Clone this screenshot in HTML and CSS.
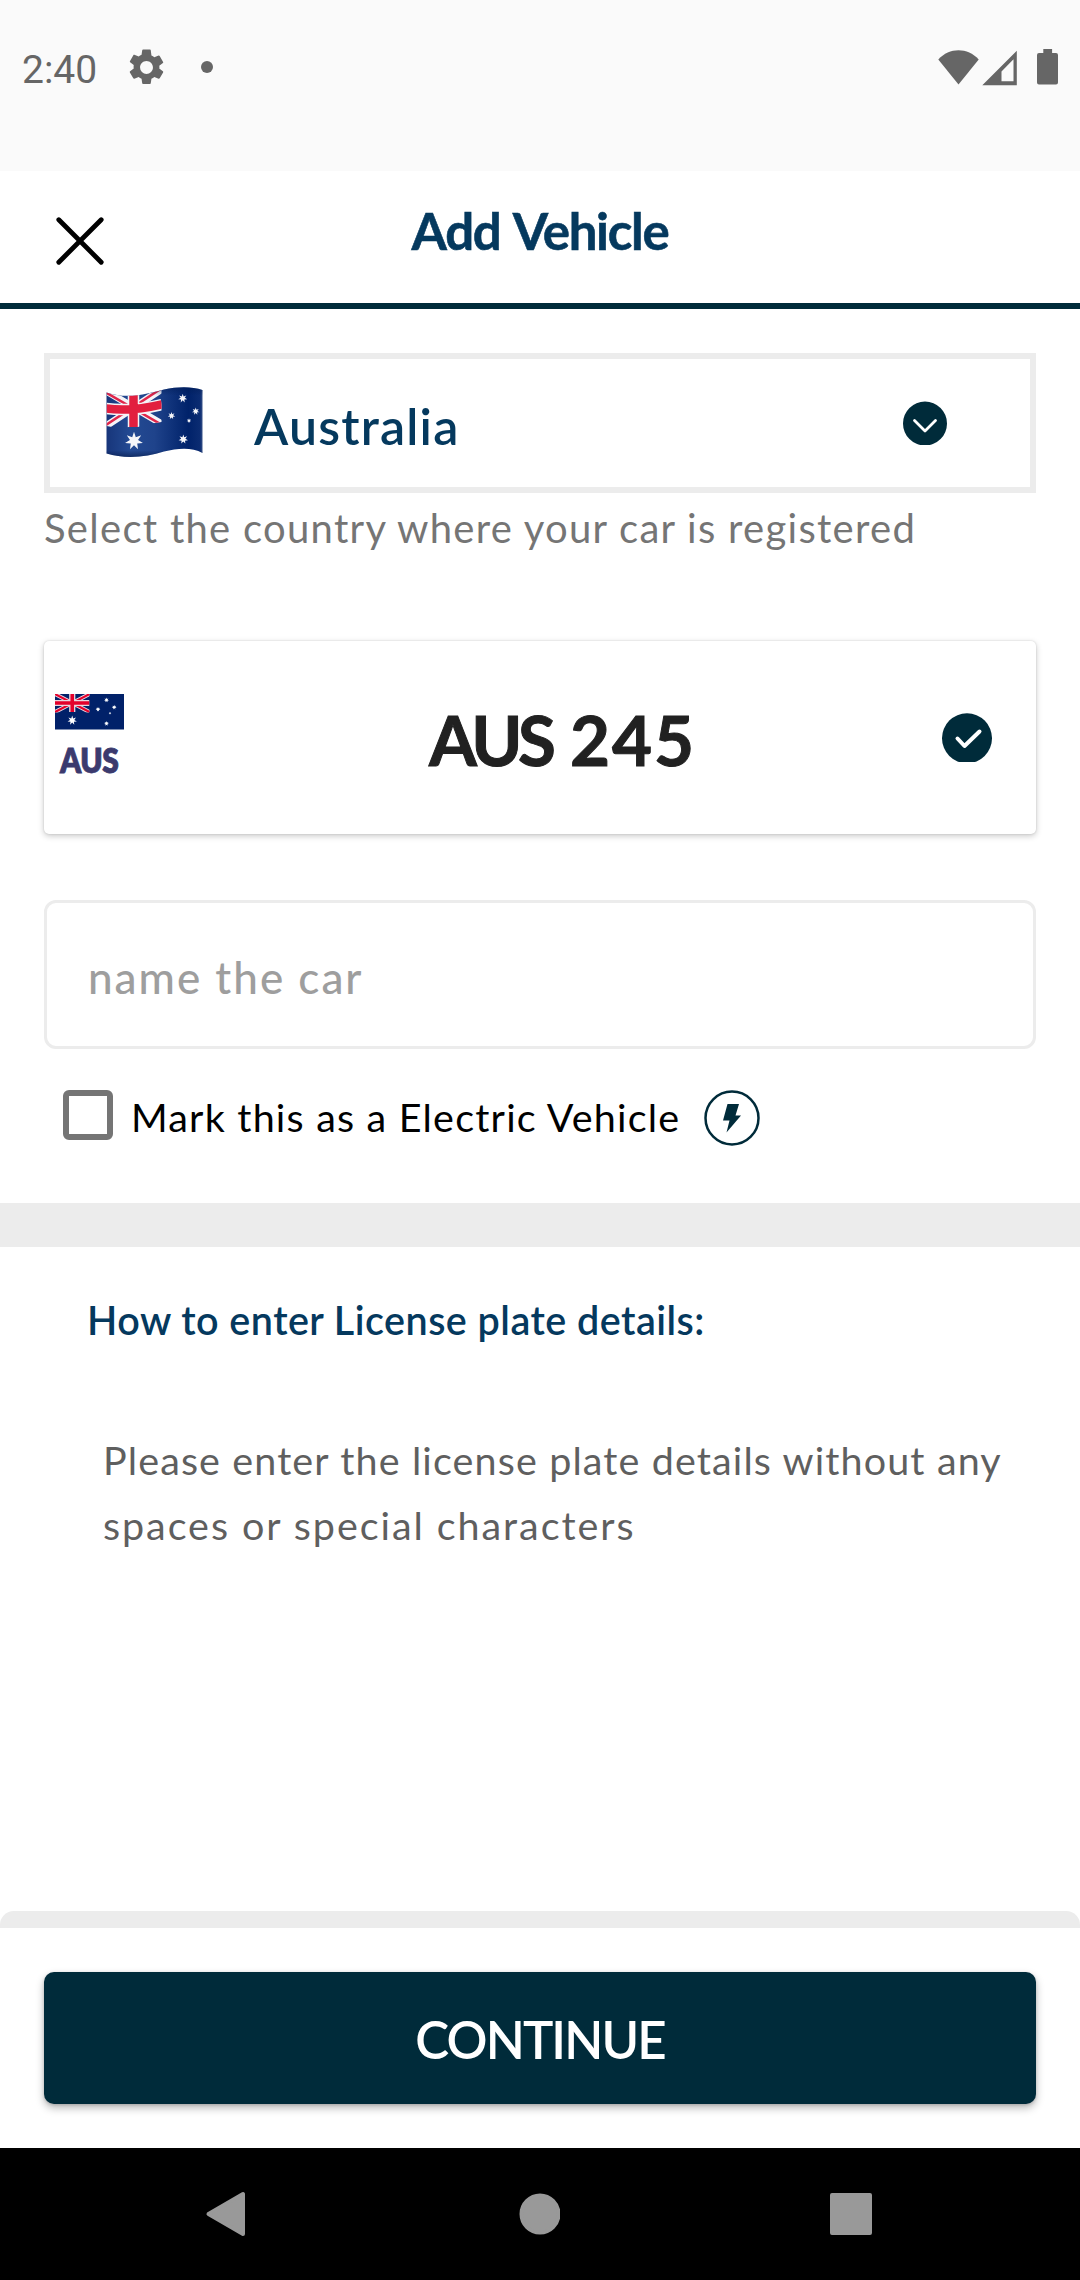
FILE: index.html
```
<!DOCTYPE html>
<html lang="en">
<head>
<meta charset="utf-8">
<title>Add Vehicle</title>
<link rel="stylesheet" href="styles.css">
</head>
<body>
<svg class="defs" width="0" height="0" aria-hidden="true">
  <defs>
    <path id="star" d="M0-10 1.95-4.05 7.82-6.23 4.39-1 9.75 2.23 3.52 2.81 4.34 9.01 0 4.5-4.34 9.01-3.52 2.81-9.75 2.23-4.39-1-7.82-6.23-1.95-4.05Z"/>
  </defs>
</svg>
<div class="screen">
  <div class="status">
    <span class="clock">2:40</span>
    <svg class="gear" viewBox="0 0 24 24"><path d="M19.14 12.94c.04-.3.06-.61.06-.94 0-.32-.02-.64-.07-.94l2.03-1.58a.49.49 0 0 0 .12-.61l-1.92-3.32a.488.488 0 0 0-.59-.22l-2.39.96c-.5-.38-1.03-.7-1.62-.94L14.4 2.5a.484.484 0 0 0-.48-.5h-3.84c-.24 0-.43.17-.47.41l-.36 2.54c-.59.24-1.13.57-1.62.94l-2.39-.96c-.22-.08-.47 0-.59.22L2.74 8.47c-.12.21-.08.47.12.61l2.03 1.58c-.05.3-.09.63-.09.94s.02.64.07.94l-2.03 1.58a.49.49 0 0 0-.12.61l1.92 3.32c.12.22.37.29.59.22l2.39-.96c.5.38 1.03.7 1.62.94l.36 2.54c.05.24.24.41.48.41h3.84c.24 0 .44-.17.47-.41l.36-2.54c.59-.24 1.13-.56 1.62-.94l2.39.96c.22.08.47 0 .59-.22l1.92-3.32c.12-.22.07-.47-.12-.61l-2.01-1.58zM12 15.6A3.61 3.61 0 0 1 8.4 12c0-1.98 1.62-3.6 3.6-3.6s3.6 1.62 3.6 3.6-1.62 3.6-3.6 3.6z"/></svg>
    <span class="dot"></span>
    <div class="indicators">
      <svg width="41" height="35" viewBox="0 0 41 35"><path d="M20.5 34.5.3 9.6C6 3.200 13 .3 20.500.3S35 3.200 40.700 9.600Z"/></svg>
      <svg class="signal" width="36" height="36" viewBox="0 0 36 36"><path fill-rule="evenodd" d="M.3 35.200 34.800.7V35.200ZM19.500 21.500V31.200H31.500V9.200Z"/></svg>
      <svg class="battery" width="21" height="36" viewBox="0 0 21 36"><path d="M6.300 0h8.800v4H19a2 2 0 0 1 2 2v27.500a2 2 0 0 1-2 2H2a2 2 0 0 1-2-2V6a2 2 0 0 1 2-2h4.300Z"/></svg>
    </div>
  </div>

  <header class="header">
    <svg class="close" width="48" height="48" viewBox="0 0 48 48"><path d="M2.800 2.800 45.200 45.200M45.200 2.800 2.800 45.200"/></svg>
    <h1 class="title">Add Vehicle</h1>
  </header>

  <main class="form">
    <div class="country">
      <svg class="flag-wave" width="97" height="72" viewBox="0 0 97 72">
        <defs>
          <linearGradient id="cloth" x1="0" x2="1" y1="0" y2="0">
            <stop offset="0" stop-color="#17357a"/><stop offset=".25" stop-color="#234a93"/><stop offset=".5" stop-color="#1f438b"/><stop offset=".85" stop-color="#00226a"/><stop offset=".97" stop-color="#0b2c72"/><stop offset="1" stop-color="#40598c"/>
          </linearGradient>
          <linearGradient id="shade" x1="0" x2="0" y1="0" y2="1">
            <stop offset="0" stop-color="#001a50" stop-opacity=".45"/><stop offset=".12" stop-color="#001a50" stop-opacity="0"/><stop offset=".88" stop-color="#00123c" stop-opacity="0"/><stop offset="1" stop-color="#00123c" stop-opacity=".7"/>
          </linearGradient>
          <clipPath id="wave"><path d="M.5 5.500C22 13 44 6 58 2.500 72-.5 86-.5 96.500 3V66C86 60 72 61 58 64.500 40 70.500 18 72 .5 66.500Z"/></clipPath>
          <clipPath id="canton"><path d="M.5 5C18 11 38 8 55.500 3V35Q42 36.500 32 40H23Q12 42 .5 39Z"/></clipPath>
        </defs>
        <g clip-path="url(#wave)">
          <path fill="url(#cloth)" d="M0 0h97v72H0z"/>
          <g clip-path="url(#canton)">
            <path stroke="#f4f4f8" stroke-width="7" d="M0 4 56 37M56 2 0 39"/>
            <path stroke="#e0264a" stroke-width="2.500" d="M0 5.500 56 38M56 1 0 38"/>
            <path stroke="#f4f4f8" stroke-width="11.500" fill="none" d="M27.500 0V42M0 21.500Q25 25 56 17.500"/>
            <path stroke="#e21f3f" stroke-width="8.500" fill="none" d="M27.500 0V42M0 21.500Q25 25 56 17.500"/>
          </g>
          <g fill="#f5f6fa">
            <use href="#star" transform="translate(28 54) scale(.92)"/>
            <use href="#star" transform="translate(76.700 11.300) scale(.46)"/>
            <use href="#star" transform="translate(65.500 28.700) scale(.38)"/>
            <use href="#star" transform="translate(89.700 24.300) scale(.38)"/>
            <use href="#star" transform="translate(83 33.700) scale(.24)"/>
            <use href="#star" transform="translate(77.300 52.300) scale(.48)"/>
          </g>
          <path fill="url(#shade)" d="M0 0h97v72H0z"/>
        </g>
      </svg>
      <span class="country-name">Australia</span>
      <svg class="chevron" width="44" height="44" viewBox="0 0 44 44"><circle cx="22" cy="22.500" r="22"/><path d="M11.500 19.500 22 30 32.500 19.500"/></svg>
    </div>
    <p class="helper">Select the country where your car is registered</p>

    <div class="plate">
      <div class="plate-region">
        <svg width="69" height="36" viewBox="0 0 69 36">
          <path fill="#012169" d="M0 0h69v35.500H0z"/>
          <svg width="34.500" height="18.500" viewBox="0 0 34.500 18.500">
            <path stroke="#e9d7e0" stroke-width="4" d="M0 0 34.500 18M34.500 0 0 18"/>
            <path stroke="#e4002b" stroke-width="2" d="M0 0 34.500 18M34.500 0 0 18"/>
            <path stroke="#e9d7e0" stroke-width="6.200" d="M17.250 0V18M0 9H34.500"/>
            <path stroke="#e4002b" stroke-width="3.600" d="M17.250 0V18M0 9H34.500"/>
          </svg>
          <g fill="#fff">
            <use href="#star" transform="translate(17.200 26.400) scale(.48)"/>
            <use href="#star" transform="translate(51.500 6) scale(.25)"/>
            <use href="#star" transform="translate(43 15.300) scale(.25)"/>
            <use href="#star" transform="translate(59.200 13.200) scale(.25)"/>
            <use href="#star" transform="translate(55 19.200) scale(.14)"/>
            <use href="#star" transform="translate(51.500 29.500) scale(.25)"/>
          </g>
        </svg>
        <span class="region-code">AUS</span>
      </div>
      <span class="plate-number"><span class="letters">AUS</span> <span class="digits">245</span></span>
      <svg class="check" width="50" height="49" viewBox="0 0 50 49"><circle cx="25" cy="25.300" r="25"/><path d="M15.500 25.500 22.500 33 37.500 18.500"/></svg>
    </div>

    <div class="name-input">name the car</div>

    <div class="ev-row">
      <span class="checkbox"></span>
      <span class="ev-label">Mark this as a Electric Vehicle</span>
      <svg class="bolt" width="56" height="56" viewBox="0 0 56 56"><circle cx="28" cy="28" r="26.500"/><path d="M23.500 14H35L31.500 25.500H37L22.500 42.500 25.500 30.500H19Z"/></svg>
    </div>
  </main>

  <section class="howto">
    <h2 class="howto-title">How to enter License plate details:</h2>
    <p class="howto-text"><span class="line-a">Please enter the license plate details without any</span><br><span class="line-b">spaces or special characters</span></p>
  </section>

  <footer class="footer">
    <button class="continue">CONTINUE</button>
  </footer>

  <nav class="navbar">
    <svg width="42" height="46" viewBox="0 0 42 46"><path d="M3.500 23 38 3V43Z"/></svg>
    <svg width="42" height="42" viewBox="0 0 42 42"><circle cx="22" cy="21" r="18.500"/></svg>
    <svg width="42" height="42" viewBox="0 0 42 42"><path d="M2 2H40V40H2Z"/></svg>
  </nav>
</div>
</body>
</html>
```
FILE: styles.css
```
* { box-sizing: border-box; margin: 0; padding: 0; }
body { background: #fff; font-family: Lato, "Open Sans", sans-serif; }
svg { display: block; flex: none; }
.defs { position: absolute; }
.screen { width: 1080px; height: 2280px; display: flex; flex-direction: column; overflow: hidden; white-space: nowrap; }

.status { height: 171px; background: #fafafa; display: flex; align-items: flex-start; padding: 46px 22px 0 22px; fill: #666; }
.clock { width: 103px; font: 400 39px/46px Roboto, sans-serif; color: #666; padding-top: 1px; }
.gear { width: 43px; height: 43px; }
.dot { width: 12px; height: 12px; border-radius: 50%; background: #666; margin: 15px 0 0 33px; }
.indicators { margin-left: auto; display: flex; align-items: flex-start; padding-top: 4px; }
.signal { margin-left: 3px; }
.battery { margin: -1px 0 0 19px; }

.header { height: 138px; border-bottom: 6px solid #002b3a; display: grid; grid-template-columns: 104px 1fr 104px; padding-top: 28px; }
.close { margin: 18px 0 0 56px; stroke: #000; stroke-width: 4.800; stroke-linecap: round; }
.title { font-size: 51px; line-height: 60px; font-weight: 700; letter-spacing: -1.300px; word-spacing: 3px; -webkit-text-stroke: .6px #05395e; color: #05395e; text-align: center; padding-top: 2px; }

.form { height: 894px; padding: 44px 44px 0; }
.country { height: 140px; border: 6px solid #ececec; display: flex; align-items: center; padding: 0 83px 0 56px; }
.country-name { font-size: 50px; line-height: 60px; font-weight: 600; letter-spacing: 1.2px; color: #05395e; margin-left: 51px; padding-top: 5px; }
.chevron { margin-left: auto; fill: #002b3a; }
.chevron path, .check path { fill: none; stroke: #fff; stroke-width: 2.8; stroke-linecap: round; stroke-linejoin: round; }
.helper { margin-top: 11px; font-size: 40px; line-height: 48px; letter-spacing: 1.28px; color: #757575; }

.plate { margin-top: 89px; height: 193px; border-radius: 5px; display: flex; align-items: center; padding: 0 44px 0 11px; box-shadow: 0 2px 6px rgba(0,0,0,.22), 0 0 2px rgba(0,0,0,.14); }
.plate-region { width: 69px; display: flex; flex-direction: column; align-items: center; padding-bottom: 4px; }
.region-code { margin-top: 13px; font-size: 34px; line-height: 34px; font-weight: 800; letter-spacing: -.5px; -webkit-text-stroke: .8px #3b3a6e; color: #3b3a6e; transform: scaleX(.88); }
.plate-number { flex: 1; font-size: 69px; line-height: 80px; font-weight: 700; -webkit-text-stroke: 1px #212121; color: #212121; padding: 5px 0 0 305px; }
.letters { letter-spacing: -4.500px; padding-right: 2px; }
.digits { letter-spacing: 2px; }
.check { fill: #002b3a; }
.check path { stroke-width: 4; }

.name-input { margin-top: 66px; height: 149px; border: 3px solid #ececec; border-radius: 12px; padding: 49px 0 0 41px; font-size: 44px; line-height: 50px; font-weight: 500; letter-spacing: 2px; color: #9e9e9e; }
.ev-row { margin-top: 41px; height: 56px; display: flex; padding-left: 19px; }
.checkbox { width: 50px; height: 50px; border: 6px solid #757575; border-radius: 6px; }
.ev-label { width: 591px; padding: 3px 0 0 18px; font-size: 39.500px; line-height: 48px; letter-spacing: 1.2px; color: #000; }
.bolt circle { fill: none; stroke: #002b3a; stroke-width: 2.500px; }
.bolt path { fill: #002b3a; }

.howto { flex: 1; border-top: 44px solid #ececec; padding: 49px 0 0 87px; }
.howto-title { font-size: 39.500px; line-height: 48px; font-weight: 600; letter-spacing: .47px; color: #05395e; }
.howto-text { margin: 83px 0 0 16px; font-size: 39.500px; line-height: 65px; color: #5f5f5f; }
.line-a { letter-spacing: 1.12px; }
.line-b { letter-spacing: 1.93px; }

.footer { height: 237px; padding: 44px; border-top: 17px solid #ececec; border-radius: 14px 14px 0 0; }
.continue { display: block; width: 992px; height: 132px; border: 0; border-radius: 10px; background: #002b3a; color: #fff; padding-top: 4px; font: 600 51px/60px Lato, sans-serif; letter-spacing: -1.9px; box-shadow: 0 4px 8px rgba(0,0,0,.28), 0 1px 3px rgba(0,0,0,.15); }

.navbar { height: 132px; background: #000; display: flex; justify-content: space-between; align-items: center; padding: 0 208px 0 205px; fill: #999; stroke: #999; stroke-width: 4; stroke-linejoin: round; }
```
